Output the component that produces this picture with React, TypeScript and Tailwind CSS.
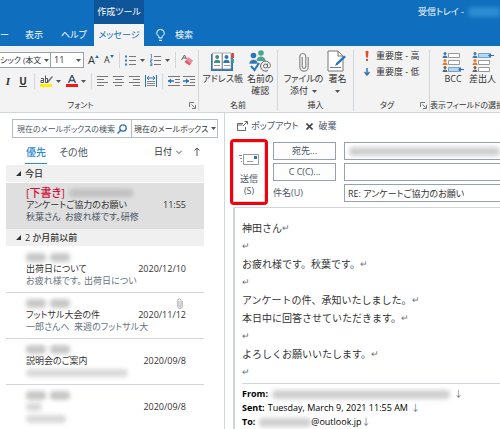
import type { ReactNode } from "react";
import clsx from "clsx";

type Mail = {
  subject?: string;
  preview?: string;
  date: string;
  attachment?: boolean;
};

const olderMails: Mail[] = [
  { subject: "出荷日について", preview: "お疲れ様です。 出荷日につい", date: "2020/12/10" },
  { subject: "フットサル大会の件", preview: "一郎さんへ\u2002来週のフットサル大", date: "2020/11/12", attachment: true },
  { subject: "説明会のご案内", date: "2020/09/8" },
  { date: "2020/09/8" },
];

const bodyLines = [
  "神田さん",
  "",
  "お疲れ様です。秋葉です。",
  "",
  "アンケートの件、承知いたしました。",
  "本日中に回答させていただきます。",
  "",
  "よろしくお願いいたします。",
  "",
];

const Caret = ({ className }: { className?: string }) => (
  <svg viewBox="0 0 5 3" className={clsx("h-[3px] w-[5px] shrink-0", className)} fill="#555">
    <path d="M0 0h5L2.5 3z" />
  </svg>
);

const Launcher = () => (
  <svg viewBox="0 0 7 7" className="h-[7px] w-[7px]" fill="none" stroke="#777">
    <path d="M.5 5V.5H5M2.5 2.5l3 3M6.500 3v3.500H3" />
  </svg>
);

const Clip = ({ className }: { className?: string }) => (
  <svg viewBox="0 0 10 20" className={className} fill="none" stroke="#8a8a8a" strokeWidth="1.200">
    <path d="M3.200 5v9.500a1.800 1.800 0 0 0 3.600 0V4.500a3 3 0 0 0-6 0V15a4.200 4.200 0 0 0 8.400 0V5" />
  </svg>
);

const Masked = ({ className }: { className?: string }) => (
  <span aria-hidden="true" className={clsx("block rounded-sm blur-[2px]", className)} />
);

const MaskedName = () => (
  <span className="flex h-3 items-center gap-1">
    <Masked className="h-[9px] w-5 bg-neutral-400/60" />
    <Masked className="h-[9px] w-5 bg-neutral-400/60" />
  </span>
);

const Tool = ({ label, children }: { label: string; children: ReactNode }) => (
  <button type="button" aria-label={label} className="flex h-4 shrink-0 items-center justify-center">
    {children}
  </button>
);

const Divider = () => <span className="h-4 w-px shrink-0 bg-gray-300" />;

const ListLines = ({ numbered }: { numbered?: boolean }) => (
  <svg viewBox="0 0 11 12" className="h-3 w-[11px]" fill="none">
    <path d="M4 2.500h7M4 6.500h7M4 10.500h7" stroke="#777" />
    {numbered ? (
      <path d="M.5.5h1V4M0 5h2v1.500H.5V8H2M0 9h2v2.500H0M.5 10.500H2" stroke="#3c78b4" strokeWidth=".8" />
    ) : (
      <path d="M0 2.500h2M0 6.500h2M0 10.500h2" stroke="#3c78b4" strokeWidth="2" />
    )}
  </svg>
);

const Align = ({ d }: { d: string }) => (
  <svg viewBox="0 0 11 10" className="h-[10px] w-[11px]" stroke="#777">
    <path d={d} />
  </svg>
);

const Indent = ({ arrow }: { arrow: string }) => (
  <svg viewBox="0 0 12 12" className="h-3 w-3" fill="none">
    <path d="M0 1.500h12M7 4.500h5M7 7.500h5M0 10.500h12" stroke="#777" />
    <path d="M0 6h6" stroke="#2b72b8" strokeWidth="1.500" />
    <path d={arrow} fill="#2b72b8" />
  </svg>
);

const RibbonGroup = ({
  label,
  launcher,
  className,
  children,
}: {
  label: string;
  launcher?: boolean;
  className?: string;
  children: ReactNode;
}) => (
  <section
    aria-label={label}
    className={clsx("flex shrink-0 flex-col justify-between border-r border-gray-300", className)}
  >
    {children}
    <div className="flex items-center text-[8px] leading-3">
      <span className="flex-1 whitespace-nowrap text-center">{label}</span>
      {launcher && (
        <button type="button" aria-label={`${label}の設定`} className="pr-[2px]">
          <Launcher />
        </button>
      )}
    </div>
  </section>
);

const FontGroup = () => (
  <RibbonGroup label="フォント" launcher className="-ml-7 w-[227px]">
    <div className="flex flex-col gap-[5px] pt-[2px] pl-7">
      <div className="flex items-center">
        <div className="relative flex items-center">
          <select
            aria-label="フォント名"
            className="h-4 w-[51px] appearance-none border border-l-0 border-gray-400 bg-white text-[8px] leading-3"
          >
            <option>シック (本文</option>
          </select>
          <Caret className="pointer-events-none absolute right-[2px]" />
        </div>
        <div className="relative flex items-center">
          <select
            aria-label="フォント サイズ"
            className="h-4 w-[33px] appearance-none border border-l-0 border-gray-400 bg-white pl-[3px] text-[9px] leading-3"
          >
            <option>11</option>
          </select>
          <Caret className="pointer-events-none absolute right-[3px]" />
        </div>
        <div className="flex items-center gap-[5px] pl-1">
          <Tool label="フォントの拡大">
            <span className="text-[11px]">A</span>
            <svg viewBox="0 0 4 3" className="mb-2 h-[3px] w-1" fill="#2b72b8"><path d="M2 0l2 3H0z" /></svg>
          </Tool>
          <Tool label="フォントの縮小">
            <span className="text-[9px]">A</span>
            <svg viewBox="0 0 4 3" className="mb-2 h-[3px] w-1" fill="#2b72b8"><path d="M0 0h4L2 3z" /></svg>
          </Tool>
          <Divider />
          <Tool label="箇条書き">
            <ListLines />
            <Caret className="ml-1" />
          </Tool>
          <Tool label="段落番号">
            <ListLines numbered />
            <Caret className="ml-1" />
          </Tool>
          <Divider />
          <Tool label="書式のクリア">
            <svg viewBox="0 0 12 12" className="h-3 w-3">
              <path d="M.5 6l3-5 2 4M2 4h3" fill="none" stroke="#666" />
              <path d="M7 3l5 3.500-2 3-5-3.500z" fill="#ef8a96" />
              <path d="M5 6l5 3.500-1.500 2L3.500 8z" fill="#d8596b" />
            </svg>
          </Tool>
        </div>
      </div>
      <div className="flex items-center gap-[5px] pl-1">
        <Tool label="斜体"><span className="w-2 font-['Liberation_Serif',serif] text-[11px] font-bold italic">I</span></Tool>
        <Tool label="下線"><span className="w-3 text-[10px] font-bold leading-3 underline">U</span></Tool>
        <Divider />
        <Tool label="蛍光ペンの色">
          <svg viewBox="0 0 13 12" className="h-3 w-[13px]">
            <path d="M0 9h12v3H0z" fill="#ffef00" />
            <path d="M6 7.500l6-6.500 1 1-5 6z" fill="#777" />
            <path d="M1 3.500h2.500v4H1V5.500h2.500M5.500.5v7h2v-4h-2" fill="none" stroke="#444" strokeWidth=".9" />
          </svg>
          <Caret className="ml-[3px]" />
        </Tool>
        <Tool label="フォントの色">
          <svg viewBox="0 0 12 12" className="h-3 w-3">
            <path d="M0 9h12v3H0z" fill="#f01818" />
            <path d="M2.500 8L6 0l3.500 8M4 5.500h4" fill="none" stroke="#44546a" strokeWidth="1.400" />
          </svg>
          <Caret className="ml-[3px]" />
        </Tool>
        <Divider />
        <Tool label="左揃え"><Align d="M0 .5h11M0 3.500h7M0 6.500h11M0 9.500h7" /></Tool>
        <Tool label="中央揃え"><Align d="M0 .5h11M2 3.500h7M0 6.500h11M2 9.500h7" /></Tool>
        <Tool label="右揃え"><Align d="M0 .5h11M4 3.500h7M0 6.500h11M4 9.500h7" /></Tool>
        <Tool label="均等割り付け">
          <svg viewBox="0 0 12 12" className="h-3 w-3" fill="none">
            <path d="M.5 0v12M11.500 0v12" stroke="#2b72b8" />
            <path d="M2 3h8M4 1L2 3l2 2M8 1l2 2-2 2" stroke="#2b72b8" />
            <path d="M2 6.500h8M2 8.500h8M2 10.500h8" stroke="#888" />
          </svg>
        </Tool>
        <Divider />
        <div className="flex gap-[3px]">
          <Tool label="インデントを減らす"><Indent arrow="M0 6l3-2.500v5z" /></Tool>
          <Tool label="インデントを増やす"><Indent arrow="M6 6L3 3.500v5z" /></Tool>
        </div>
      </div>
    </div>
  </RibbonGroup>
);

const BigButton = ({
  icon,
  lines,
  menu,
  className,
}: {
  icon: ReactNode;
  lines: string[];
  menu?: boolean;
  className?: string;
}) => (
  <button type="button" className={clsx("flex flex-col items-center whitespace-nowrap leading-3", className)}>
    <span className="mb-px flex h-[22px] items-end">{icon}</span>
    <span>{lines[0]}</span>
    <span className="flex h-3 items-center gap-1">
      {lines[1]}
      {menu && <Caret />}
    </span>
  </button>
);

const FieldsIcon = ({ active }: { active: number }) => (
  <svg viewBox="0 0 22 20" className="h-5 w-[22px]">
    {["#3c78b4", "#e87722", "#666"].map((color, i) => (
      <g key={color} transform={`translate(0 ${i * 7})`}>
        <circle cx="3" cy="1.500" r="1.500" fill={color} />
        <path d="M.5 6a2.500 2.500 0 0 1 5 0z" fill={color} />
        <path
          d="M6.500 1.500h11v4h-11z"
          fill={i === active ? "#b9d6f0" : "#fff"}
          stroke={i === active ? "#6fa3d0" : "#999"}
        />
        {i === active && <path d="M22 3h-3V1l-3 2.500 3 2.500V4h3z" fill="#2b72b8" />}
      </g>
    ))}
  </svg>
);

const Ribbon = () => (
  <div className="flex h-[67px] shrink-0 overflow-hidden border-b border-gray-300 bg-[#f3f3f3] pt-1 pb-px">
    <FontGroup />
    <RibbonGroup label="名前" className="w-[79px]">
      <div className="flex justify-center gap-1">
        <BigButton
          lines={["アドレス帳"]}
          icon={
            <svg viewBox="0 0 23 20" className="h-5 w-[23px]">
              <path d="M0 2h22v17H0z" fill="#2f75b5" />
              <path d="M1.500 1h9.500v16H1.500zM11.500 1h8.500v16h-8.500z" fill="#fff" stroke="#8b8b8b" strokeWidth=".7" />
              <path d="M20.500 1H23v5h-2.500z" fill="#e04a32" />
              <path d="M20.500 7H23v4h-2.500z" fill="#3aa0a0" />
              <g fill="#3f8f7f">
                <circle cx="6.200" cy="5" r="2" />
                <path d="M3 11a3.200 3.200 0 0 1 6.400 0z" />
              </g>
              <g fill="#2f75b5">
                <circle cx="15.500" cy="5" r="2" />
                <path d="M12.300 11a3.200 3.200 0 0 1 6.400 0z" />
              </g>
              <path d="M3 13.500h6M13 13.500h6" stroke="#999" />
            </svg>
          }
        />
        <BigButton
          lines={["名前の", "確認"]}
          icon={
            <svg viewBox="0 0 23 22" className="h-[22px] w-[23px]">
              <circle cx="12" cy="3" r="2.800" fill="#4aa58d" />
              <path d="M7.500 11a4.500 4.500 0 0 1 9 0z" fill="#4aa58d" />
              <circle cx="4.500" cy="5.500" r="2.800" fill="#2f75b5" />
              <path d="M0 14a4.500 4.500 0 0 1 9 0z" fill="#2f75b5" stroke="#f3f3f3" strokeWidth=".6" />
              <path d="M2 16l3.500 4L10 13" fill="none" stroke="#2f75b5" strokeWidth="2" />
              <circle cx="16.500" cy="16" r="2" fill="none" stroke="#666" />
              <path d="M18.500 13.500V17c.5 1.500 3 1 3-1.500a5 5 0 1 0-2.500 5" fill="none" stroke="#666" />
            </svg>
          }
        />
      </div>
    </RibbonGroup>
    <RibbonGroup label="挿入" className="w-[76px]">
      <div className="flex justify-center gap-1">
        <BigButton lines={["ファイルの", "添付"]} menu icon={<Clip className="h-5 w-[10px]" />} />
        <BigButton
          lines={["署名"]}
          menu
          icon={
            <svg viewBox="0 0 20 22" className="h-[22px] w-5">
              <path d="M1 1h10l5 5v15H1z" fill="#fff" stroke="#777" />
              <path d="M11 1v5h5" fill="none" stroke="#777" />
              <path d="M3 17.500h11" stroke="#777" />
              <path d="M19 7l-8 7.500-3 1.500 1.200-3L17 5.500z" fill="#2f75b5" />
            </svg>
          }
        />
      </div>
    </RibbonGroup>
    <RibbonGroup label="タグ" launcher className="w-[76px]">
      <div className="flex flex-col gap-1 pl-[10px]">
        <button type="button" className="flex items-center gap-[6px] leading-3">
          <svg viewBox="0 0 6 10" className="h-[10px] w-[6px]" fill="#e84c22">
            <path d="M1.500 0h3L4 6.500H2zM2 8h2v2H2z" />
          </svg>
          重要度 - 高
        </button>
        <button type="button" className="flex items-center gap-[6px] leading-3">
          <svg viewBox="0 0 6 8" className="h-2 w-[6px]" fill="none" stroke="#2f75b5" strokeWidth="1.500">
            <path d="M3 0v7M.5 4L3 7l2.500-3" />
          </svg>
          重要度 - 低
        </button>
      </div>
    </RibbonGroup>
    <section aria-label="表示フィールドの選択" className="flex flex-1 flex-col justify-between">
      <div className="flex pl-[7px]">
        <BigButton className="w-8" lines={["BCC"]} icon={<FieldsIcon active={2} />} />
        <BigButton lines={["差出人"]} icon={<FieldsIcon active={0} />} />
      </div>
      <span className="whitespace-nowrap text-[8px] leading-3">表示フィールドの選択</span>
    </section>
  </div>
);

const TitleBar = () => (
  <header className="flex h-[46px] shrink-0 bg-[#106ebe] text-white">
    <nav aria-label="リボン" className="flex items-end">
      <a href="#insert" className="w-[25px] pb-[5px] leading-3">ー</a>
      <a href="#view" className="w-9 pb-[5px] leading-3">表示</a>
      <a href="#help" className="w-[33px] pb-[5px] leading-3">ヘルプ</a>
      <div className="flex h-full w-[50px] flex-col bg-[#0f5599] text-center">
        <span className="flex h-6 items-center justify-center whitespace-nowrap">作成ツール</span>
        <a
          href="#message"
          aria-current="page"
          className="flex flex-1 items-center justify-center whitespace-nowrap bg-[#f3f3f3] text-[#106ebe]"
        >
          メッセージ
        </a>
      </div>
      <button type="button" className="flex items-center gap-[10px] pb-[5px] pl-3 leading-3">
        <svg viewBox="0 0 9 12" className="h-3 w-[9px]" fill="none" stroke="#fff">
          <path d="M3 9V7.500C1.500 6.500.7 5.500.7 4.200a3.800 3.800 0 0 1 7.600 0C8.300 5.500 7.500 6.500 6 7.500V9zM3 11.300h3" />
        </svg>
        検索
      </button>
    </nav>
    <div className="flex h-6 flex-1 items-center justify-end gap-1 overflow-hidden whitespace-nowrap">
      受信トレイ -
      <Masked className="h-[10px] w-8 bg-sky-300/30" />
    </div>
  </header>
);

const GroupHeader = ({ children }: { children: ReactNode }) => (
  <h2 className="flex h-[18px] shrink-0 items-center gap-1 border-b border-white bg-[#f0f0f0] pl-[10px] font-medium">
    <svg viewBox="0 0 5 5" className="h-[5px] w-[5px]" fill="#333">
      <path d="M5 0v5H0z" />
    </svg>
    {children}
  </h2>
);

const MailRow = ({ mail }: { mail: Mail }) => (
  <li className="relative h-[46px] border-b border-gray-300 pt-1 pl-5 leading-3 last:border-0">
    <MaskedName />
    {mail.subject ? (
      <p className="whitespace-nowrap">{mail.subject}</p>
    ) : (
      <div className="flex h-3 items-center"><Masked className="h-2 w-4 bg-neutral-400/40" /></div>
    )}
    {mail.preview ? (
      <p className="whitespace-nowrap text-gray-500">{mail.preview}</p>
    ) : (
      <div className="flex h-3 items-center">
        <Masked className={clsx("h-2 bg-neutral-400/40", mail.subject ? "w-[102px]" : "w-10")} />
      </div>
    )}
    <div className="absolute top-1 right-[18px] flex flex-col items-end">
      <span className="flex h-3 items-center pr-[3px]">
        {mail.attachment && <Clip className="h-[11px] w-[6px]" />}
      </span>
      <time>{mail.date}</time>
    </div>
  </li>
);

const MailList = () => (
  <aside className="flex w-[225px] shrink-0 flex-col border-r border-gray-300 pt-[6px] pr-5 pl-[6px]">
    <div className="-mr-[14px] ml-[6px] flex h-[19px] shrink-0 border border-[#b5bcc6]">
      <div className="relative flex w-[119px] items-center border-r border-[#b5bcc6]">
        <input
          type="text"
          aria-label="現在のメールボックスの検索"
          placeholder="現在のメールボックスの検索"
          className="w-full pl-1 text-[8px] placeholder:text-gray-600"
        />
        <svg viewBox="0 0 10 10" className="absolute right-1 h-[10px] w-[10px]" fill="none" stroke="#2b6cb0" strokeWidth="1.300">
          <circle cx="6" cy="4" r="3.200" />
          <path d="M3.700 6.300L.5 9.500" />
        </svg>
      </div>
      <div className="relative flex flex-1 items-center">
        <select aria-label="検索範囲" className="w-full appearance-none pl-[2px] text-[8px]">
          <option>現在のメールボックス</option>
        </select>
        <Caret className="pointer-events-none absolute right-px" />
      </div>
    </div>
    <div className="flex h-[27px] shrink-0 items-center pl-[19px] text-[10px] leading-4">
      <button type="button" className="mt-1 mr-3 border-b border-[#2b88d8] px-px pb-[3px] font-medium text-[#2b88d8]">優先</button>
      <button type="button" className="text-gray-600">その他</button>
      <button type="button" className="mr-3 ml-auto flex items-center gap-1 text-[9px]">
        日付
        <svg viewBox="0 0 6 4" className="h-1 w-[6px]" fill="none" stroke="#555"><path d="M0 .5l3 3 3-3" /></svg>
      </button>
      <button type="button" aria-label="並べ替え" className="mr-1">
        <svg viewBox="0 0 6 9" className="h-[9px] w-[6px]" fill="none" stroke="#555"><path d="M3 9V1M.5 3.500L3 1l2.500 2.500" /></svg>
      </button>
    </div>
    <GroupHeader>今日</GroupHeader>
    <div className="relative h-[46px] shrink-0 bg-[#dfdfdf] pt-1 pl-5 leading-3">
      <p className="flex items-center text-[11px] font-medium text-[#d0103a]">
        [下書き]
        <Masked className="ml-1 h-2 w-16 bg-neutral-400/50" />
      </p>
      <p>アンケートご協力のお願い</p>
      <p className="text-gray-600">秋葉さん{"\u2002"}お疲れ様です。研修</p>
      <time className="absolute top-4 right-[18px]">11:55</time>
    </div>
    <GroupHeader>2 か月前以前</GroupHeader>
    <ul>
      {olderMails.map((mail, i) => (
        <MailRow key={i} mail={mail} />
      ))}
    </ul>
  </aside>
);

const fieldButton = "h-[18px] w-[63px] border border-gray-400 bg-[#fdfdfd] text-gray-600";
const fieldInput = "h-[18px] min-w-0 flex-1 border border-r-0 border-gray-400 px-[3px]";

const Compose = () => (
  <main className="flex min-w-0 flex-1 flex-col pt-[5px] pl-[5px]">
    <div className="flex h-4 shrink-0 items-center gap-2 pl-[7px] text-gray-600">
      <button type="button" className="flex items-center gap-[3px]">
        <svg viewBox="0 0 11 10" className="h-[10px] w-[11px]" fill="none" stroke="#666">
          <path d="M6 2.500H.5v7h8V6M.5 4h5" />
          <path d="M6 5l4-4M7.500.5h3v3" />
        </svg>
        ポップアウト
      </button>
      <button type="button" className="flex items-center gap-[5px]">
        <svg viewBox="0 0 7 7" className="h-[7px] w-[7px]" stroke="#444" strokeWidth="1.600"><path d="M.5.5l6 6M6.500.5l-6 6" /></svg>
        破棄
      </button>
    </div>
    <form className="mt-[5px] flex shrink-0 gap-[5px]" onSubmit={(e) => e.preventDefault()}>
      <div className="rounded-sm border-3 border-[#f5000c]">
        <button
          type="submit"
          className="flex h-[60px] w-8 flex-col items-center justify-end border border-gray-300 pb-1 text-[9px] leading-3 text-gray-600"
        >
          <svg viewBox="0 0 20 11" className="mb-2 h-[11px] w-5" fill="none">
            <path d="M4.500.5h15v10h-15z" fill="#fff" stroke="#999" />
            <path d="M0 1.500h3M1 4.500h2M2 7.500h1" stroke="#888" />
            <path d="M15 2h3v3h-3z" fill="#2b72b8" />
            <path d="M8 7.500h6" stroke="#999" />
          </svg>
          <span>送信</span>
          <span>(S)</span>
        </button>
      </div>
      <div className="flex min-w-0 flex-1 flex-col justify-center gap-[3px]">
        <div className="flex gap-2">
          <button type="button" className={fieldButton}>宛先...</button>
          <div className="flex h-[18px] min-w-0 flex-1 items-center border border-r-0 border-gray-400 pl-1">
            <Masked className="h-[9px] w-full bg-neutral-400/50" />
          </div>
        </div>
        <div className="flex gap-2">
          <button type="button" className={fieldButton}>C C(C)...</button>
          <input aria-label="CC" className={fieldInput} />
        </div>
        <div className="flex items-center gap-2">
          <label htmlFor="subject" className="w-[63px] text-gray-600">件名(U)</label>
          <input id="subject" defaultValue="RE: アンケートご協力のお願い" className={fieldInput} />
        </div>
      </div>
    </form>
    <article className="mt-[2px] ml-[3px] flex-1 border-t border-l-2 border-gray-300 pt-[11px] pl-[7px]">
      <div className="text-[10px] leading-[18px] [font-feature-settings:normal]">
        {bodyLines.map((line, i) => (
          <p key={i} className="flex h-[18px] items-center whitespace-nowrap">
            {line}
            <span className="text-[9px] text-gray-500">↵</span>
          </p>
        ))}
      </div>
      <div className="mt-[2px] border-t border-gray-300 pt-[3px] text-[9px] leading-[14px] text-black">
        <p className="flex h-[14px] items-center gap-1">
          <b>From:</b>
          <Masked className="h-[9px] w-[178px] bg-neutral-400/50" />
          <span className="text-gray-500">↓</span>
        </p>
        <p className="flex h-[14px] items-center gap-[3px]">
          <b>Sent:</b>
          <span>Tuesday, March 9, 2021 11:55 AM</span>
          <span className="text-gray-500">↓</span>
        </p>
        <p className="flex h-[14px] items-center">
          <b>To:</b>
          <Masked className="ml-1 h-[9px] w-[52px] bg-neutral-400/50" />
          @outlook.jp
          <span className="text-gray-500">↓</span>
        </p>
      </div>
    </article>
  </main>
);

export default function App() {
  return (
    <div
      lang="ja"
      className="flex h-screen flex-col overflow-hidden bg-white font-['Open_Sans','Noto_Sans_CJK_JP',sans-serif] text-[9px] text-[#333] [font-feature-settings:'palt']"
    >
      <TitleBar />
      <Ribbon />
      <div className="flex min-h-0 flex-1 overflow-hidden">
        <MailList />
        <Compose />
      </div>
    </div>
  );
}
